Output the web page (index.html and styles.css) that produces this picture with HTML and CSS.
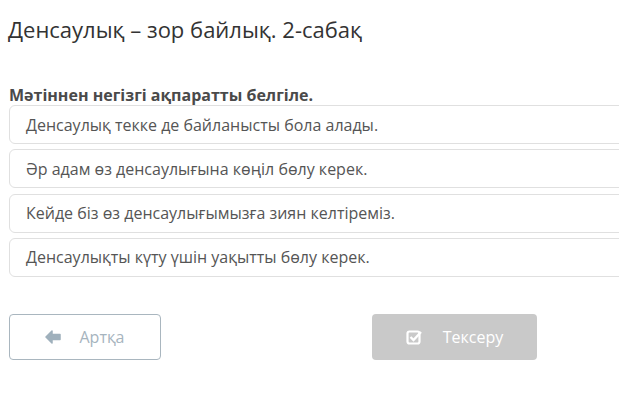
FILE: index.html
```html
<!DOCTYPE html>
<html lang="kk">
<head>
<meta charset="utf-8">
<link rel="stylesheet" href="styles.css">
</head>
<body>
<div class="page">
  <h1 class="title">Денсаулық – зор байлық. 2-сабақ</h1>
  <div class="question">Мәтіннен негізгі ақпаратты белгіле.</div>
  <div class="options">
    <div class="option">Денсаулық текке де байланысты бола алады.</div>
    <div class="option">Әр адам өз денсаулығына көңіл бөлу керек.</div>
    <div class="option">Кейде біз өз денсаулығымызға зиян келтіреміз.</div>
    <div class="option">Денсаулықты күту үшін уақытты бөлу керек.</div>
  </div>
  <div class="actions">
    <button class="btn btn-back">
      <svg class="icon" width="16" height="14" viewBox="0 0 16 14"><path d="M7 1 L1 7 L7 13 L7 9.5 L15 9.5 L15 4.5 L7 4.5 Z" fill="#9fb0bc" stroke="#9fb0bc" stroke-width="1.5" stroke-linejoin="round"/></svg>
      <span>Артқа</span>
    </button>
    <button class="btn btn-check">
      <svg class="icon" width="17" height="16" viewBox="0 0 17 16"><rect x="1.5" y="2.5" width="12" height="12" rx="2" fill="none" stroke="#fff" stroke-width="2.2"/><path d="M4.5 8 L7.5 11 L15 3" fill="none" stroke="#fff" stroke-width="2.4"/></svg>
      <span>Тексеру</span>
    </button>
  </div>
</div>
</body>
</html>
```
FILE: styles.css
```css
html, body {
  margin: 0;
  padding: 0;
  background: #fff;
  font-family: "Open Sans", "Noto Sans", sans-serif;
  overflow: hidden;
}
.page {
  padding: 14px 0 0 9px;
  width: 640px;
}
.title {
  margin: 0 0 0 -1px;
  font-size: 22px;
  font-weight: 400;
  line-height: 30px;
  color: #333;
}
.question {
  margin-top: 41px;
  font-size: 16px;
  font-weight: 700;
  line-height: 20px;
  color: #4a4a4a;
}
.options {
  display: flex;
  flex-direction: column;
  gap: 5.33px;
}
.option {
  box-sizing: border-box;
  height: 39px;
  padding: 0 16px;
  display: flex;
  align-items: center;
  border: 1px solid #e0e0e0;
  border-radius: 6px;
  font-size: 16px;
  color: #555;
}
.actions {
  display: flex;
  gap: 211px;
  margin-top: 37px;
}
.btn {
  box-sizing: border-box;
  height: 46px;
  border-radius: 4px;
  display: flex;
  align-items: center;
  justify-content: center;
  gap: 18px;
  font-family: "Open Sans", "Noto Sans", sans-serif;
  font-size: 16px;
  padding: 0;
}
.btn-back {
  width: 152px;
  border: 1px solid #a9b6bf;
  background: #fff;
  color: #a6b4be;
}
.btn-check {
  width: 165px;
  border: none;
  background: #c9c9c9;
  color: #fff;
  gap: 20px;
}
.icon {
  display: block;
}
```
